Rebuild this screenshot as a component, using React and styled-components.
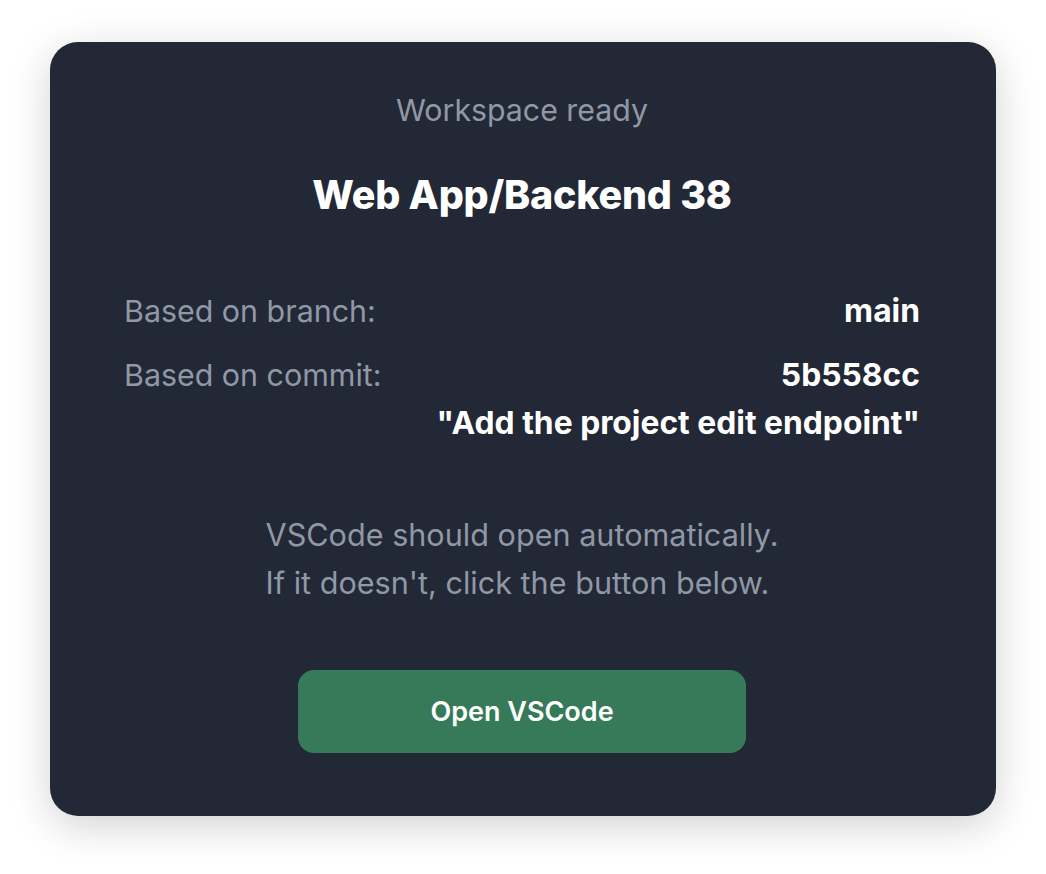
import React from 'react';
import styled, { createGlobalStyle } from 'styled-components';

const Global = createGlobalStyle`
  body {
    margin: 0;
    background: #ffffff;
    font-family: Inter, "Noto Sans", sans-serif;
  }
`;

const Page = styled.div`
  padding: 42px 50px 58px;
`;

const Card = styled.div`
  background: #222835;
  border-radius: 28px;
  box-shadow: 0 10px 40px rgba(0, 0, 0, 0.18);
  padding: 44px 76px 63px 74px;
  display: flex;
  flex-direction: column;
  align-items: center;
`;

const Status = styled.div`
  color: #9098a6;
  font-size: 30.3px;
  line-height: 48px;
`;

const Title = styled.h1`
  margin: 37px 0 0;
  color: #ffffff;
  font-size: 39.4px;
  font-weight: 800;
  line-height: 48px;
  letter-spacing: -0.2px;
`;

const Details = styled.div`
  margin-top: 68px;
  width: 100%;
  display: flex;
  flex-direction: column;
  gap: 16px;
`;

const Row = styled.div`
  display: flex;
  justify-content: space-between;
  align-items: flex-start;
`;

const Label = styled.div`
  color: #9098a6;
  font-size: 30.4px;
  line-height: 48px;
`;

const Value = styled.div`
  color: #ffffff;
  font-size: 31.8px;
  font-weight: 700;
  line-height: 48px;
  text-align: right;
`;

const Hint = styled.p`
  margin: 64px 0 0;
  color: #9098a6;
  font-size: 30.6px;
  line-height: 48px;
  text-align: left;
`;

const Button = styled.button`
  margin-top: 63px;
  width: 448px;
  height: 83px;
  border: none;
  border-radius: 16px;
  background: #367a59;
  color: #ffffff;
  font-family: inherit;
  font-size: 27px;
  font-weight: 600;
  cursor: pointer;
`;

export default function App() {
  return (
    <>
      <Global />
      <Page>
        <Card>
          <Status>Workspace ready</Status>
          <Title>Web App/Backend 38</Title>
          <Details>
            <Row>
              <Label>Based on branch:</Label>
              <Value>main</Value>
            </Row>
            <Row>
              <Label>Based on commit:</Label>
              <Value>
                5b558cc
                <br />
                "Add the project edit endpoint"
              </Value>
            </Row>
          </Details>
          <Hint>
            VSCode should open automatically.
            <br />
            If it doesn't, click the button below.
          </Hint>
          <Button>Open VSCode</Button>
        </Card>
      </Page>
    </>
  );
}
